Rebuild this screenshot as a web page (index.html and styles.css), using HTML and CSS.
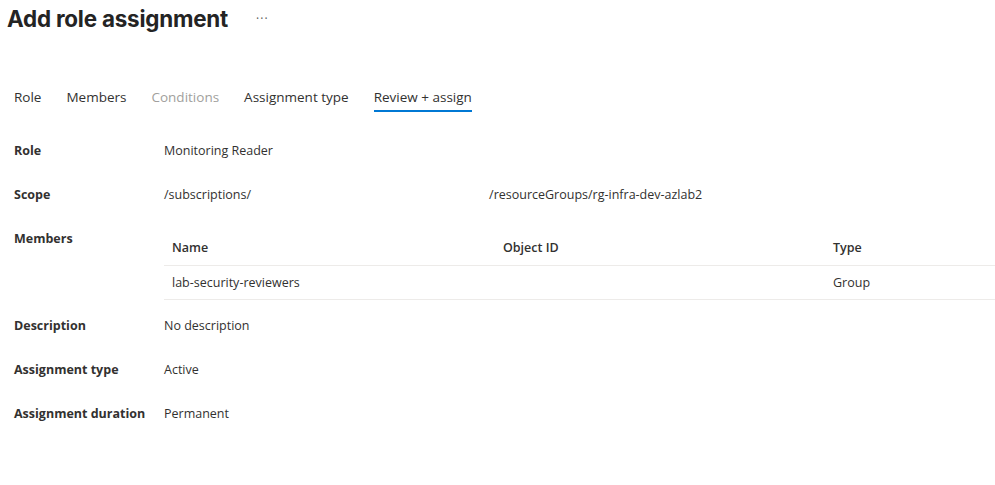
FILE: index.html
```html
<!DOCTYPE html>
<html lang="en">
<head>
    <meta charset="UTF-8">
    <meta name="viewport" content="width=device-width, initial-scale=1.0">
    <title>Add role assignment</title>
    <link rel="stylesheet" href="styles.css">
</head>
<body>

    <div class="header">
        <h1>Add role assignment</h1>
        <span class="more">&middot;&middot;&middot;</span>
    </div>

    <div class="tabs">
        <span class="tab">Role</span>
        <span class="tab">Members</span>
        <span class="tab disabled">Conditions</span>
        <span class="tab">Assignment type</span>
        <span class="tab active">Review + assign</span>
    </div>

    <div class="details">
        <div class="row">
            <div class="label">Role</div>
            <div class="value">Monitoring Reader</div>
        </div>
        <div class="row">
            <div class="label">Scope</div>
            <div class="value">/subscriptions/<span class="redacted"></span>/resourceGroups/rg-infra-dev-azlab2</div>
        </div>
        <div class="row members">
            <div class="label">Members</div>
            <table class="members-table">
                <thead>
                    <tr>
                        <th class="col-name">Name</th>
                        <th class="col-id">Object ID</th>
                        <th>Type</th>
                    </tr>
                </thead>
                <tbody>
                    <tr>
                        <td>lab-security-reviewers</td>
                        <td></td>
                        <td>Group</td>
                    </tr>
                </tbody>
            </table>
        </div>
        <div class="row">
            <div class="label">Description</div>
            <div class="value">No description</div>
        </div>
        <div class="row">
            <div class="label">Assignment type</div>
            <div class="value">Active</div>
        </div>
        <div class="row">
            <div class="label">Assignment duration</div>
            <div class="value">Permanent</div>
        </div>
    </div>

</body>
</html>
```

FILE: styles.css
```css
html {
  box-sizing: border-box;
}

*, *:before, *:after {
  box-sizing: inherit;
}

body {
  margin: 0;
  font-family: "Open Sans", "Noto Sans", sans-serif;
  font-size: 13px;
  color: #323130;
  background: white;
}

.header {
  display: flex;
  align-items: center;
  height: 36px;
  padding-left: 7px;
}

h1 {
  margin: 0;
  font-family: Inter, sans-serif;
  font-size: 22.4px;
  font-weight: 700;
  letter-spacing: -0.2px;
  color: #242424;
}

.more {
  margin-left: 28px;
  color: #605e5c;
  font-size: 12px;
  letter-spacing: 1px;
}

.tabs {
  display: flex;
  gap: 25px;
  margin-top: 51px;
  padding-left: 14px;
}

.tab {
  font-size: 13.5px;
  line-height: 20px;
  padding-bottom: 3px;
  border-bottom: 2px solid transparent;
}

.tab.disabled {
  color: #a19f9d;
}

.tab.active {
  border-bottom-color: #0078d4;
}

.details {
  padding-top: 29px;
  padding-left: 14px;
}

.row {
  display: flex;
  margin-bottom: 24px;
  line-height: 20px;
}

.row.members {
  margin-bottom: 16px;
}

.label {
  width: 150px;
  flex: none;
  font-weight: 700;
  font-size: 12.5px;
}

.value {
  font-size: 12.5px;
}

.redacted {
  display: inline-block;
  width: 238px;
}

.members-table {
  flex: 1;
  border-collapse: collapse;
  font-size: 12.5px;
}

.members-table th,
.members-table td {
  text-align: left;
  padding: 0 8px;
  border-bottom: 1px solid #edebe9;
}

.members-table th {
  font-weight: 600;
  height: 36px;
  padding-top: 2px;
}

.members-table td {
  height: 34px;
  padding-top: 2px;
}

.col-name {
  width: 331px;
}

.col-id {
  width: 330px;
}
```
